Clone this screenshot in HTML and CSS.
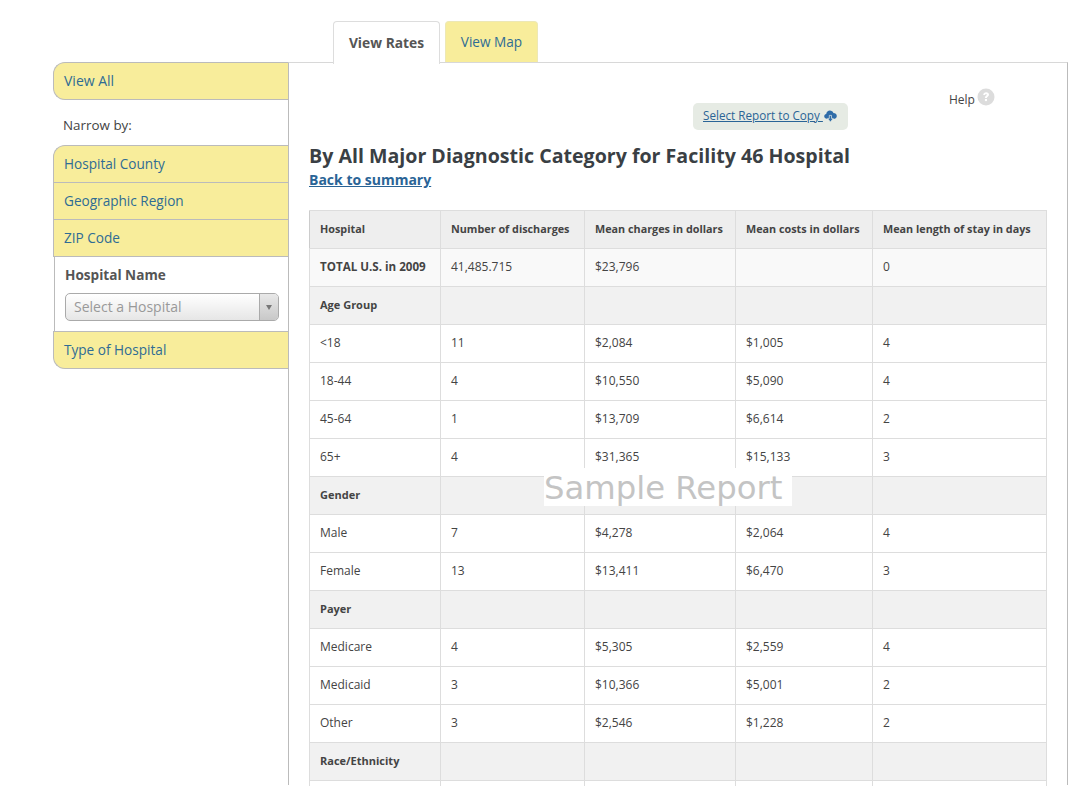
FILE: index.html
```html
<!DOCTYPE html>
<html lang="en">
<head>
    <meta charset="UTF-8">
    <meta name="viewport" content="width=device-width, initial-scale=1.0">
    <title>Hospital Report</title>
    <link rel="stylesheet" href="styles.css">
</head>
<body>
    <div class="tabs">
        <a class="tab tab-active" href="#">View Rates</a>
        <a class="tab" href="#">View Map</a>
    </div>

    <div class="page">
        <div class="sidebar">
            <a class="side-item side-single" href="#">View All</a>
            <div class="narrow">Narrow by:</div>
            <a class="side-item side-top" href="#">Hospital County</a>
            <a class="side-item" href="#">Geographic Region</a>
            <a class="side-item" href="#">ZIP Code</a>
            <div class="side-panel">
                <div class="panel-label">Hospital Name</div>
                <div class="select-box">
                    <span class="select-text">Select a Hospital</span>
                    <span class="select-arrow"><span class="arrow-down"></span></span>
                </div>
            </div>
            <a class="side-item side-bottom" href="#">Type of Hospital</a>
        </div>

        <div class="content">
            <div class="help-row">
                <span class="help-text">Help</span>
                <svg class="help-icon" width="18" height="18" viewBox="0 0 18 18">
                    <circle cx="9" cy="9" r="8.5" fill="#dcdcdc"/>
                    <path d="M6.200 7c0-1.700 1.300-2.800 3-2.800s2.800 1 2.800 2.400c0 1.100-.6 1.700-1.300 2.200-.5.400-.8.600-.8 1.200H7.900c0-1.100.4-1.700 1.100-2.200.5-.4.800-.6.800-1.100 0-.5-.3-.8-.8-.8-.6 0-.9.400-.9 1.100z" fill="#fff"/>
                    <rect x="7.900" y="11" width="2.100" height="2.100" fill="#fff"/>
                </svg>
            </div>
            <div class="copy-row">
                <div class="copy-btn">
                    <a class="copy-link" href="#">Select Report to Copy&nbsp;</a>
                    <svg class="cloud-icon" width="13" height="13" viewBox="0 0 13 13">
                        <path d="M3 8.800C1.400 8.800.2 7.700.2 6.300c0-1.200.9-2.200 2-2.400C2.500 2 4 .6 5.900.6c1.600 0 2.900.9 3.500 2.300 1.900 0 3.400 1.300 3.400 3 0 1.700-1.300 2.900-3 2.900z" fill="#2f6ca8"/>
                        <path d="M5.300 5.400h2.200v3h1.700l-2.800 3.700-2.800-3.700h1.700z" fill="#2f6ca8" stroke="#e6ebe4" stroke-width=".7"/>
                    </svg>
                </div>
            </div>
            <h1>By All Major Diagnostic Category for Facility 46 Hospital</h1>
            <a class="back-link" href="#">Back to summary</a>

            <div class="table-wrap">
                <table class="report">
                    <thead>
                        <tr>
                            <th class="col-a">Hospital</th>
                            <th class="col-b">Number of discharges</th>
                            <th class="col-c">Mean charges in dollars</th>
                            <th class="col-d">Mean costs in dollars</th>
                            <th class="col-e">Mean length of stay in days</th>
                        </tr>
                    </thead>
                    <tbody>
                        <tr class="total"><td>TOTAL U.S. in 2009</td><td>41,485.715</td><td>$23,796</td><td></td><td>0</td></tr>
                        <tr class="group"><td>Age Group</td><td></td><td></td><td></td><td></td></tr>
                        <tr><td>&lt;18</td><td>11</td><td>$2,084</td><td>$1,005</td><td>4</td></tr>
                        <tr><td>18-44</td><td>4</td><td>$10,550</td><td>$5,090</td><td>4</td></tr>
                        <tr><td>45-64</td><td>1</td><td>$13,709</td><td>$6,614</td><td>2</td></tr>
                        <tr><td>65+</td><td>4</td><td>$31,365</td><td>$15,133</td><td>3</td></tr>
                        <tr class="group"><td>Gender</td><td></td><td></td><td></td><td></td></tr>
                        <tr><td>Male</td><td>7</td><td>$4,278</td><td>$2,064</td><td>4</td></tr>
                        <tr><td>Female</td><td>13</td><td>$13,411</td><td>$6,470</td><td>3</td></tr>
                        <tr class="group"><td>Payer</td><td></td><td></td><td></td><td></td></tr>
                        <tr><td>Medicare</td><td>4</td><td>$5,305</td><td>$2,559</td><td>4</td></tr>
                        <tr><td>Medicaid</td><td>3</td><td>$10,366</td><td>$5,001</td><td>2</td></tr>
                        <tr><td>Other</td><td>3</td><td>$2,546</td><td>$1,228</td><td>2</td></tr>
                        <tr class="group"><td>Race/Ethnicity</td><td></td><td></td><td></td><td></td></tr>
                        <tr><td></td><td></td><td></td><td></td><td></td></tr>
                    </tbody>
                </table>
                <div class="watermark">Sample Report</div>
            </div>
        </div>
    </div>
</body>
</html>
```

FILE: styles.css
```css
html, body {
    height: 786px;
    overflow: hidden;
}

body {
    font-family: "Open Sans", sans-serif;
    font-size: 12px;
    line-height: 18px;
    margin: 0;
    background-color: #fff;
    color: #444;
}

a {
    color: #2a6496;
}

.tabs {
    display: flex;
    gap: 5px;
    height: 42px;
    padding: 21px 0 0 333px;
}

.tab {
    width: 91px;
    height: 41px;
    line-height: 39px;
    text-align: center;
    font-size: 13.6px;
    text-decoration: none;
    background: #f8ed9b;
    border: 1px solid #ede8b5;
    border-bottom: 0;
    border-radius: 4px 4px 0 0;
    color: #2f6c94;
}

.tab-active {
    width: 105px;
    height: 42px;
    line-height: 41px;
    position: relative;
    z-index: 2;
    background: #fff;
    border-color: #ddd;
    color: #555;
    font-size: 13.8px;
    font-weight: 700;
}

.page {
    display: flex;
    height: 723px;
    padding-left: 53px;
}

.sidebar {
    width: 235px;
    flex: none;
    position: relative;
    z-index: 1;
    margin-top: -1px;
}

.side-item {
    display: block;
    height: 36px;
    line-height: 36px;
    padding-left: 10px;
    font-size: 13.6px;
    text-decoration: none;
    color: #2f6c94;
    background: #f8ed9b;
    border: 1px solid #bbb;
    border-top: 0;
    border-right: 0;
}

.side-single {
    border-top: 1px solid #bbb;
    border-radius: 12px 0 0 12px;
    font-size: 14px;
}

.narrow {
    height: 45px;
    line-height: 50px;
    padding-left: 10px;
    font-size: 13.4px;
    color: #444;
}

.side-top {
    border-top: 1px solid #bbb;
    border-radius: 12px 0 0 0;
}

.side-bottom {
    border-top: 1px solid #bbb;
    border-radius: 0 0 0 12px;
}

.side-panel {
    height: 74px;
    margin-left: 1px;
    padding: 8px 9px 0 10px;
    box-sizing: border-box;
    border-left: 1px solid #bbb;
}

.panel-label {
    font-size: 13.6px;
    font-weight: 700;
    line-height: 20px;
    color: #555;
    margin-bottom: 8px;
}

.select-box {
    display: flex;
    height: 28px;
    box-sizing: border-box;
    border: 1px solid #aaa;
    border-radius: 5px;
    background: linear-gradient(#fff, #e6e6e6);
}

.select-text {
    flex: 1;
    padding-left: 8px;
    line-height: 26px;
    font-size: 14px;
    color: #999;
}

.select-arrow {
    width: 18px;
    display: flex;
    align-items: center;
    justify-content: center;
    border-left: 1px solid #aaa;
    border-radius: 0 4px 4px 0;
    background: linear-gradient(#e8e8e8, #c8c8c8);
}

.arrow-down {
    width: 0;
    height: 0;
    border-left: 3px solid transparent;
    border-right: 3px solid transparent;
    border-top: 5px solid #777;
}

.content {
    width: 780px;
    height: 723px;
    flex: none;
    box-sizing: border-box;
    padding: 0 20px;
    border: 1px solid #bbb;
    border-top: 1px solid #d8d8d8;
    border-bottom: 0;
    margin-top: -1px;
    background: #fff;
}

.help-row {
    display: flex;
    align-items: center;
    gap: 2px;
    height: 18px;
    margin-top: 25px;
    padding-left: 640px;
}

.help-text {
    position: relative;
    top: 3px;
}

.copy-row {
    display: flex;
    padding-left: 384px;
    margin-top: -3px;
}

.copy-btn {
    display: flex;
    align-items: center;
    gap: 1px;
    height: 27px;
    padding: 0 11px 0 10px;
    border-radius: 5px;
    background: #e6ebe4;
    font-size: 11.7px;
}

.copy-link {
    padding-bottom: 4px;
}

h1 {
    margin: 13px 0 0;
    font-size: 19.6px;
    line-height: 26px;
    font-weight: 700;
    color: #3a3f44;
}

.back-link {
    display: block;
    width: max-content;
    font-size: 14px;
    font-weight: 700;
    line-height: 22px;
}

.table-wrap {
    position: relative;
    margin-top: 19px;
}

.report {
    border-collapse: collapse;
    table-layout: fixed;
    width: 737px;
}

.report th,
.report td {
    height: 38px;
    padding: 0 10px 2px;
    box-sizing: border-box;
    border: 1px solid #ddd;
    text-align: left;
    vertical-align: middle;
    white-space: nowrap;
}

.report th {
    background: #eee;
    font-weight: 700;
    font-size: 10.8px;
}

.report th:first-child {
    border-left-color: #ccc;
}

.col-a { width: 131px; }
.col-b { width: 144px; }
.col-c { width: 151px; }
.col-d { width: 137px; }
.col-e { width: 174px; }

.total {
    background: #f9f9f9;
}

.report .total td:first-child {
    font-weight: 700;
    font-size: 11.6px;
}

.report .group td:first-child {
    font-weight: 700;
    font-size: 11px;
}

.group {
    background: #f1f1f1;
}

.watermark {
    position: absolute;
    left: 235px;
    top: 258px;
    width: 248px;
    height: 38px;
    padding-top: 2px;
    box-sizing: border-box;
    background: #fff;
    font-family: "DejaVu Sans", sans-serif;
    font-size: 32.3px;
    line-height: 36px;
    color: #c4c4c4;
}
```
